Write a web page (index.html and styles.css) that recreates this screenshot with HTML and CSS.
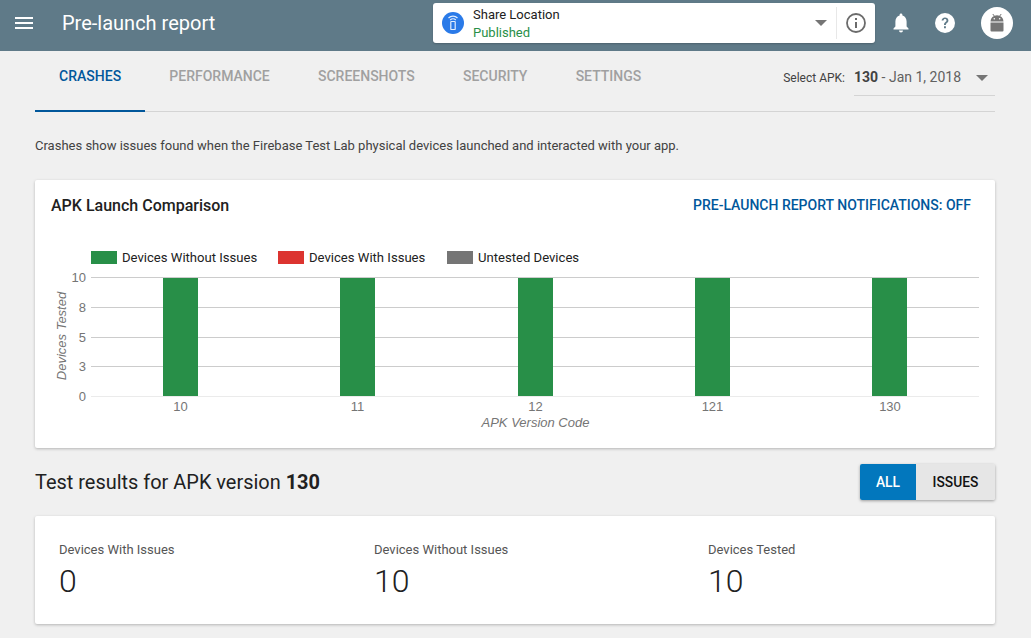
FILE: index.html
```html
<!DOCTYPE html>
<html lang="en">
<head>
    <meta charset="UTF-8" />
    <title>Pre-launch report</title>
    <link rel="stylesheet" href="styles.css">
</head>
<body>
    <header class="topbar">
        <svg class="menu-icon" width="18" height="12" viewBox="0 0 18 12"><path d="M0 0h18v2H0zM0 5h18v2H0zM0 10h18v2H0z" fill="#fff"/></svg>
        <h1 class="page-title">Pre-launch report</h1>
        <div class="app-picker">
            <span class="app-icon">
                <svg width="12" height="16" viewBox="0 0 12 16"><path d="M1.500 3a6.500 6.500 0 0 1 9 0M3.200 5a4 4 0 0 1 5.600 0" fill="none" stroke="#e3eefd" stroke-width="1.200"/><rect x="3.800" y="6.500" width="4.400" height="8" rx="0.600" fill="none" stroke="#e3eefd" stroke-width="1.200"/></svg>
            </span>
            <div class="app-text">
                <div class="app-name">Share Location</div>
                <div class="app-status">Published</div>
            </div>
            <span class="caret"></span>
            <span class="app-info">
                <svg width="22" height="22" viewBox="0 0 22 22"><circle cx="11" cy="11" r="9" fill="none" stroke="#6b6b6b" stroke-width="1.800"/><path d="M10 10h2v6h-2zM10 6h2v2h-2z" fill="#6b6b6b"/></svg>
            </span>
        </div>
        <svg class="top-icon bell" width="20" height="22" viewBox="0 0 20 22"><path d="M10 1.500c-.8 0-1.400.6-1.400 1.400v.6C5.900 4.200 4.400 6.600 4.400 9.500v5L2.500 16.500v1h15v-1l-1.900-2v-5c0-2.900-1.500-5.300-4.200-6v-.6c0-.8-.6-1.400-1.400-1.400zM8 18.500a2 2 0 0 0 4 0z" fill="#fff"/></svg>
        <svg class="top-icon help" width="22" height="22" viewBox="0 0 22 22"><circle cx="11" cy="11" r="10" fill="#fff"/><path d="M7.600 8.600c0-1.900 1.500-3.200 3.400-3.200s3.400 1.300 3.400 3c0 2.300-2.500 2.400-2.500 4.600H10c0-3 2.500-3 2.500-4.600 0-.8-.7-1.400-1.500-1.400s-1.500.7-1.500 1.600zM10 14.300h1.900v1.900H10z" fill="#5f7a88"/></svg>
        <span class="avatar">
            <svg width="20" height="20" viewBox="0 0 20 20"><path d="M3.500 8.500a6.500 6.300 0 0 1 13 0z" fill="#757575"/><path d="M3.500 9.500h13v8a1 1 0 0 1-1 1h-11a1 1 0 0 1-1-1z" fill="#757575"/><path d="M5.800 1l1.800 2.500M14.200 1l-1.800 2.500" stroke="#757575" stroke-width="1"/><circle cx="7.300" cy="5.800" r="0.800" fill="#fff"/><circle cx="12.700" cy="5.800" r="0.800" fill="#fff"/></svg>
        </span>
    </header>

    <main class="content">
        <div class="tabs-row">
            <nav class="tabs">
                <a class="tab tab-active">CRASHES</a>
                <a class="tab">PERFORMANCE</a>
                <a class="tab">SCREENSHOTS</a>
                <a class="tab">SECURITY</a>
                <a class="tab">SETTINGS</a>
            </nav>
            <div class="apk-select">
                <span class="apk-label">Select APK:</span>
                <div class="apk-value"><span><b>130</b> - Jan 1, 2018</span><span class="caret"></span></div>
            </div>
        </div>

        <p class="intro">Crashes show issues found when the Firebase Test Lab physical devices launched and interacted with your app.</p>

        <section class="card chart-card">
            <div class="chart-head">
                <h2>APK Launch Comparison</h2>
                <a class="notif-link">PRE-LAUNCH REPORT NOTIFICATIONS: OFF</a>
            </div>
            <svg class="chart" width="960" height="200" viewBox="35 240 960 200">
                <!-- legend -->
                <rect x="91" y="251" width="26" height="13" fill="#288f48"/>
                <text class="legend" x="122" y="262">Devices Without Issues</text>
                <rect x="278" y="251" width="26" height="13" fill="#dc3430"/>
                <text class="legend" x="309" y="262">Devices With Issues</text>
                <rect x="447" y="251" width="26" height="13" fill="#757575"/>
                <text class="legend" x="478" y="262">Untested Devices</text>
                <!-- grid -->
                <g stroke="#cccccc" stroke-width="1">
                    <line x1="91" x2="979" y1="277.500" y2="277.500"/>
                    <line x1="91" x2="979" y1="307.500" y2="307.500"/>
                    <line x1="91" x2="979" y1="337.500" y2="337.500"/>
                    <line x1="91" x2="979" y1="366.500" y2="366.500"/>
                </g>
                <line x1="91" x2="979" y1="396.500" y2="396.500" stroke="#ebebeb"/>
                <!-- bars -->
                <g fill="#288f48">
                    <rect x="163" y="278" width="35" height="118"/>
                    <rect x="340" y="278" width="35" height="118"/>
                    <rect x="518" y="278" width="35" height="118"/>
                    <rect x="695" y="278" width="35" height="118"/>
                    <rect x="872" y="278" width="35" height="118"/>
                </g>
                <!-- axes -->
                <g class="tick" text-anchor="end">
                    <text x="86" y="282">10</text>
                    <text x="86" y="312">8</text>
                    <text x="86" y="342">5</text>
                    <text x="86" y="371">3</text>
                    <text x="86" y="401">0</text>
                </g>
                <g class="tick" text-anchor="middle">
                    <text x="180.500" y="411">10</text>
                    <text x="357.500" y="411">11</text>
                    <text x="535.500" y="411">12</text>
                    <text x="712.500" y="411">121</text>
                    <text x="890" y="411">130</text>
                </g>
                <text class="axis-title" x="535.500" y="427" text-anchor="middle">APK Version Code</text>
                <text class="axis-title" transform="translate(66 336) rotate(-90)" text-anchor="middle">Devices Tested</text>
            </svg>
        </section>

        <div class="results-head">
            <h2>Test results for APK version <b>130</b></h2>
            <div class="toggle">
                <button class="toggle-btn toggle-on">ALL</button>
                <button class="toggle-btn">ISSUES</button>
            </div>
        </div>

        <section class="card stats">
            <div class="stat stat-a">
                <div class="stat-label">Devices With Issues</div>
                <div class="stat-num">0</div>
            </div>
            <div class="stat stat-b">
                <div class="stat-label">Devices Without Issues</div>
                <div class="stat-num">10</div>
            </div>
            <div class="stat">
                <div class="stat-label">Devices Tested</div>
                <div class="stat-num">10</div>
            </div>
        </section>
    </main>
</body>
</html>
```

FILE: styles.css
```css
* { box-sizing: border-box; }
html, body { height: 100%; }
body {
    margin: 0;
    font-family: Roboto, sans-serif;
    background-color: #f0f0f0;
    color: #212121;
    overflow: hidden;
}

/* Top bar */
.topbar {
    display: flex;
    align-items: center;
    height: 51px;
    padding: 0 18px 5px 15px;
    background-color: #5f7a88;
}
.menu-icon { flex: none; }
.page-title {
    flex: none;
    margin: 0 0 0 29px;
    width: 371px;
    font-size: 20px;
    font-weight: 400;
    color: #fff;
}
.app-picker {
    flex: none;
    display: flex;
    align-items: center;
    width: 442px;
    height: 40px;
    padding-left: 9px;
    background: #fff;
    border-radius: 3px;
    box-shadow: 0 1px 2px rgba(0, 0, 0, .2);
}
.app-icon {
    display: flex;
    align-items: center;
    justify-content: center;
    width: 22px;
    height: 22px;
    border-radius: 50%;
    background: #2a7ae8;
}
.app-text { flex: 1; margin-left: 9px; }
.app-name { font-size: 13px; line-height: 18px; color: #212121; }
.app-status { font-size: 13px; line-height: 17px; color: #288f48; }
.caret {
    display: inline-block;
    width: 0;
    height: 0;
    border-left: 6px solid transparent;
    border-right: 6px solid transparent;
    border-top: 6px solid #757575;
}
.app-info {
    display: flex;
    align-items: center;
    justify-content: center;
    width: 39px;
    height: 32px;
    margin-left: 9px;
    border-left: 1px solid #e8e8e8;
}
.top-icon { flex: none; }
.bell { margin-left: 16px; }
.help { margin-left: 23px; }
.avatar {
    flex: none;
    display: flex;
    align-items: center;
    justify-content: center;
    width: 32px;
    height: 32px;
    margin-left: 25px;
    border-radius: 50%;
    background: #fff;
}

.content { padding: 0 36px 0 35px; }

/* Tabs */
.tabs-row {
    display: flex;
    justify-content: space-between;
    height: 61px;
    border-bottom: 1px solid #d4d4d4;
}
.tabs { display: flex; }
.tab {
    height: 61px;
    padding: 17px 24.100px 0;
    font-size: 14px;
    font-weight: 500;
    line-height: 17px;
    color: #a0a0a0;
}
.tab-active {
    color: #01579b;
    border-bottom: 2px solid #01579b;
}
.apk-select {
    display: flex;
    align-items: flex-start;
}
.apk-label {
    margin-top: 20px;
    font-size: 12px;
    line-height: 15px;
    color: #424242;
}
.apk-value {
    display: flex;
    justify-content: space-between;
    width: 141px;
    height: 45px;
    margin-left: 9px;
    padding: 18px 7px 0 0;
    font-size: 14px;
    line-height: 17px;
    color: #616161;
    border-bottom: 1px solid #d4d4d4;
}
.apk-value b { font-weight: 700; color: #424242; }
.apk-value .caret { margin-top: 6px; }

.intro {
    margin: 26px 0 26px;
    font-size: 13px;
    line-height: 16px;
    color: #424242;
}

/* Cards */
.card {
    background: #fff;
    border-radius: 2px;
    box-shadow: 0 1px 3px rgba(0, 0, 0, .25);
}
.chart-card { height: 268px; }
.chart-head {
    display: flex;
    justify-content: space-between;
    align-items: center;
    height: 50px;
    padding: 0 24px 0 16px;
}
.chart-head h2 {
    margin: 0;
    font-size: 16px;
    font-weight: 500;
    color: #212121;
}
.notif-link {
    font-size: 14px;
    font-weight: 500;
    color: #01579b;
}
.chart { display: block; margin-top: 10px; }
.legend { font-family: Roboto, sans-serif; font-size: 13.100px; fill: #212121; }
.tick { font-family: "Liberation Sans", sans-serif; font-size: 13px; fill: #757575; }
.axis-title { font-family: "Liberation Sans", sans-serif; font-size: 13px; font-style: italic; fill: #757575; }

/* Results */
.results-head {
    display: flex;
    justify-content: space-between;
    align-items: center;
    height: 68px;
}
.results-head h2 {
    margin: 0;
    font-size: 19.950px;
    font-weight: 400;
    color: #212121;
}
.results-head b { font-weight: 700; }
.toggle {
    display: flex;
    height: 36px;
    border-radius: 2px;
    overflow: hidden;
    box-shadow: 0 1px 3px rgba(0, 0, 0, .35);
}
.toggle-btn {
    border: none;
    padding: 0;
    width: 79px;
    font-family: Roboto, sans-serif;
    font-size: 13.800px;
    font-weight: 500;
    color: #111;
    background: #e6e6e6;
}
.toggle-on { width: 56px; color: #fff; background: #0277bd; }

.stats {
    display: flex;
    height: 108px;
    padding: 26px 0 0 24px;
}
.stat { flex: none; width: 315px; }
.stat-b { width: 334px; }
.stat-label { font-size: 13px; line-height: 16px; color: #555; }
.stat-num { margin-top: 4px; font-size: 32px; font-weight: 300; line-height: 38px; color: #212121; }
```
